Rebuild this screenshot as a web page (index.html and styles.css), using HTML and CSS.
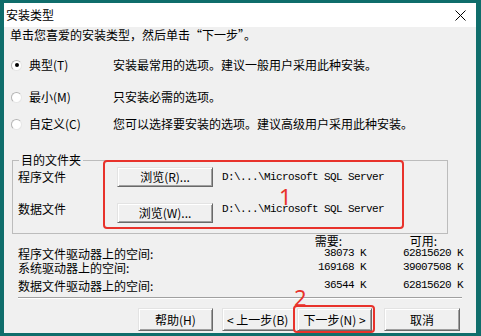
FILE: index.html
```html
<!DOCTYPE html>
<html>
<head>
  <title>安装类型</title>
  <link rel="stylesheet" href="styles.css">
</head>
<body>
  <div class="window">
    <div class="titlebar">
      <span class="title">安装类型</span>
      <svg class="close" width="11" height="11" viewBox="0 0 11 11">
        <path d="M0.5 0.5 L10.5 10.5 M10.5 0.5 L0.5 10.5" stroke="#000" stroke-width="1" fill="none"/>
      </svg>
    </div>

    <div class="content">
      <div class="subtitle">单击您喜爱的安装类型，然后单击“下一步”。</div>

      <div class="options">
        <div class="option">
          <span class="radio checked"></span>
          <span class="option-label">典型(T)</span>
          <span class="option-desc">安装最常用的选项。建议一般用户采用此种安装。</span>
        </div>
        <div class="option option-min">
          <span class="radio"></span>
          <span class="option-label">最小(M)</span>
          <span class="option-desc">只安装必需的选项。</span>
        </div>
        <div class="option option-custom">
          <span class="radio"></span>
          <span class="option-label">自定义(C)</span>
          <span class="option-desc">您可以选择要安装的选项。建议高级用户采用此种安装。</span>
        </div>
      </div>

      <div class="group">
        <span class="legend">目的文件夹</span>
        <div class="field-row">
          <span class="field-label">程序文件</span>
          <button class="btn browse">浏览(R)...</button>
          <span class="path">D:\...\Microsoft SQL Server</span>
        </div>
        <div class="field-row row-data">
          <span class="field-label">数据文件</span>
          <button class="btn browse">浏览(W)...</button>
          <span class="path">D:\...\Microsoft SQL Server</span>
        </div>
        <div class="mark mark-group"></div>
        <div class="mark-num num-1">1</div>
      </div>

      <div class="space">
        <span></span>
        <span class="head head-need">需要:</span>
        <span class="head head-free">可用:</span>

        <span>程序文件驱动器上的空间:</span>
        <span class="num">38073 K</span>
        <span class="num">62815620 K</span>

        <span>系统驱动器上的空间:</span>
        <span class="num">169168 K</span>
        <span class="num">39007508 K</span>

        <span class="last">数据文件驱动器上的空间:</span>
        <span class="num last">36544 K</span>
        <span class="num last">62815620 K</span>
      </div>

      <div class="separator"></div>

      <div class="actions">
        <button class="btn btn-help">帮助(H)</button>
        <button class="btn btn-back">&lt; 上一步(B)</button>
        <button class="btn btn-next">下一步(N) &gt;</button>
        <button class="btn btn-cancel">取消</button>
        <div class="mark mark-next"></div>
        <div class="mark-num num-2">2</div>
      </div>
    </div>
  </div>
</body>
</html>
```

FILE: styles.css
```css
* {
  box-sizing: border-box;
}

html, body {
  margin: 0;
  height: 336px;
  overflow: hidden;
}

body {
  background-color: #0f6d6b;
  padding: 3px 5px 3px 4px;
  font-family: "Noto Sans CJK SC", sans-serif;
  font-size: 12px;
  color: #000;
}

.window {
  height: 330px;
  background-color: #f0f0f0;
  display: flex;
  flex-direction: column;
}

.titlebar {
  height: 24px;
  background-color: #fff;
  display: flex;
  align-items: center;
  justify-content: space-between;
  padding: 0 10px 0 2px;
}

.title {
  line-height: 16px;
}

.content {
  padding-left: 6px;
}

.subtitle {
  height: 16px;
  line-height: 16px;
}

/* install type options */
.options {
  margin-top: 14px;
}

.option {
  display: flex;
  align-items: center;
  height: 16px;
  line-height: 16px;
}

.option-min {
  margin-top: 16px;
}

.option-custom {
  margin-top: 11px;
}

.radio {
  width: 11px;
  height: 11px;
  margin-left: 1px;
  border-radius: 50%;
  border: 1px solid #b4b4b4;
  border-right-color: #e6e6e6;
  border-bottom-color: #e6e6e6;
  background-color: #fff;
  display: flex;
  align-items: center;
  justify-content: center;
}

.radio.checked::after {
  content: "";
  width: 4px;
  height: 4px;
  border-radius: 50%;
  background-color: #000;
}

.option-label {
  width: 84px;
  margin-left: 7px;
}

/* destination folder group */
.group {
  position: relative;
  margin: 28px 0 0 2px;
  width: 436px;
  height: 74px;
  border: 1px solid #bcbcbc;
  padding: 6px 0 0 5px;
}

.legend {
  position: absolute;
  top: -9px;
  left: 6px;
  padding: 0 2px;
  line-height: 16px;
  background-color: #f0f0f0;
}

.field-row {
  display: flex;
  align-items: center;
  height: 20px;
}

.row-data {
  margin-top: 16px;
}

.row-data .field-label,
.row-data .path {
  margin-bottom: 8px;
}

.field-label {
  width: 99px;
  line-height: 16px;
}

.btn {
  font-family: "Noto Sans CJK SC", sans-serif;
  font-size: 12px;
  color: #000;
  background-color: #f0f0f0;
  border: 1px solid;
  border-color: #e3e3e3 #696969 #696969 #e3e3e3;
  box-shadow: inset 1px 1px #fff, inset -1px -1px #a0a0a0;
  padding: 0;
  margin: 0;
  line-height: 16px;
  white-space: nowrap;
}

.browse {
  width: 96px;
  height: 20px;
}

.path {
  margin-left: 9px;
  font-family: "Liberation Mono", monospace;
  font-size: 11px;
  letter-spacing: -0.6px;
  line-height: 12px;
}

/* red annotations */
.mark {
  position: absolute;
  border: 2px solid #e8322b;
  border-radius: 4px;
}

.mark-num {
  position: absolute;
  color: #e8322b;
  font-family: "Noto Sans", sans-serif;
  font-size: 22px;
  line-height: 17px;
}

.mark-group {
  top: -1px;
  left: 90px;
  width: 301px;
  height: 69px;
}

.num-1 {
  top: 27px;
  left: 266px;
}

/* disk space */
.space {
  display: grid;
  grid-template-columns: 250px 98px 97px;
  grid-template-rows: 13px 14px 14px 18px;
  margin-left: 8px;
  line-height: 13px;
}

.head-need {
  text-align: right;
  padding-right: 24px;
}

.head-free {
  text-align: right;
  padding-right: 26px;
}

.num {
  text-align: right;
  font-family: "Liberation Mono", monospace;
  font-size: 11px;
  letter-spacing: -0.6px;
}

.space .last {
  margin-top: 4px;
}

.separator {
  margin: 4px 0 0 8px;
  width: 444px;
  border-top: 1px solid #a0a0a0;
  border-bottom: 1px solid #fff;
}

/* bottom buttons */
.actions {
  position: relative;
  display: flex;
  margin-top: 9px;
  height: 23px;
}

.actions .btn {
  height: 23px;
}

.btn-help {
  width: 75px;
  margin-left: 128px;
}

.btn-back {
  width: 73px;
  margin-left: 9px;
  text-align: left;
  padding-left: 4px;
}

.btn-next {
  width: 75px;
  margin-left: 2px;
}

.btn-cancel {
  width: 76px;
  margin-left: 12px;
}

.mark-next {
  top: -3px;
  left: 283px;
  width: 82px;
  height: 28px;
}

.num-2 {
  top: -19px;
  left: 284px;
}
```
